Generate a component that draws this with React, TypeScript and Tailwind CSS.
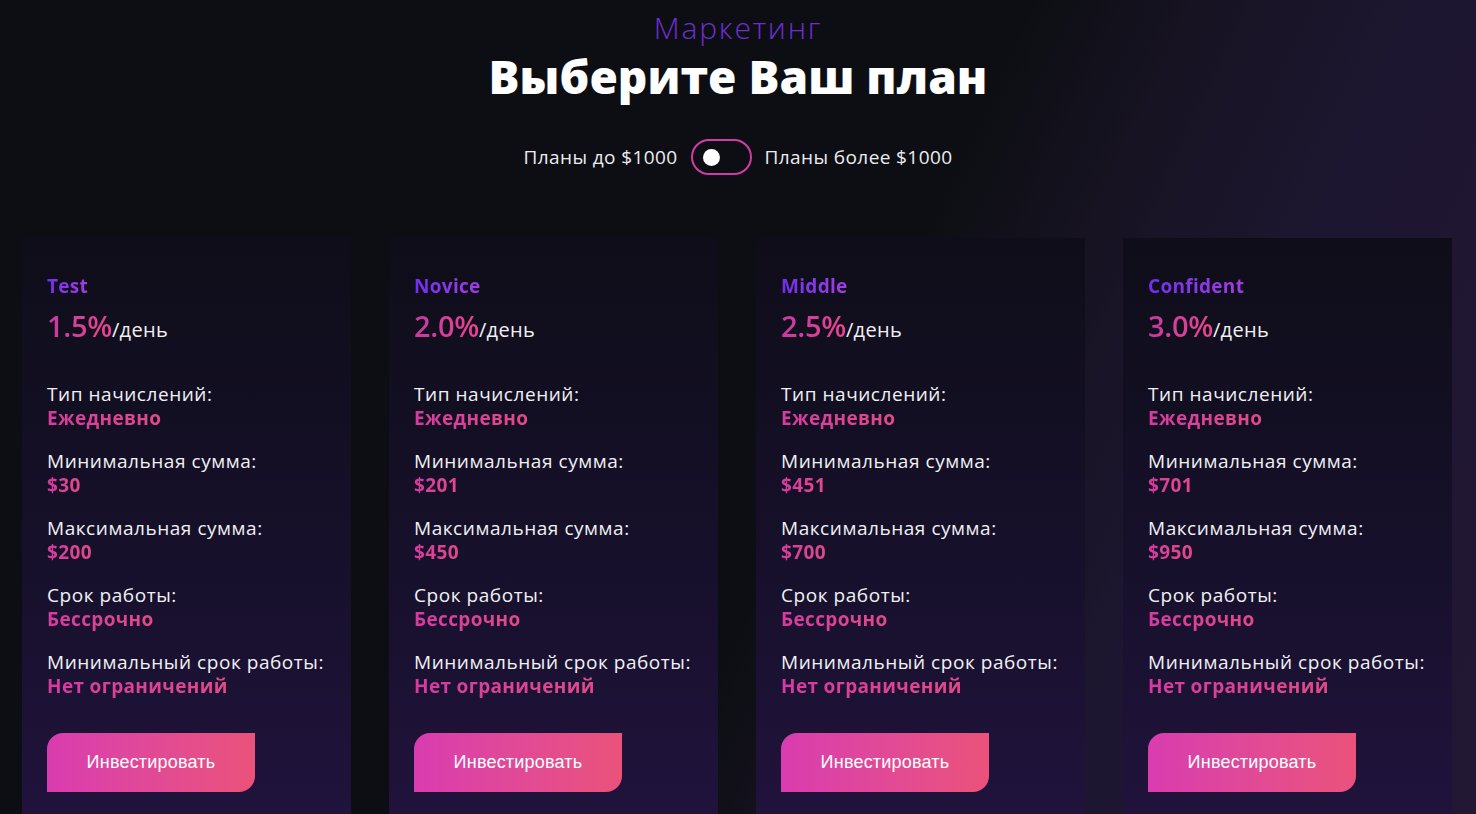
import React from "react";

const plans = [
  { name: "Test", rate: "1.5%", min: "$30", max: "$200" },
  { name: "Novice", rate: "2.0%", min: "$201", max: "$450" },
  { name: "Middle", rate: "2.5%", min: "$451", max: "$700" },
  { name: "Confident", rate: "3.0%", min: "$701", max: "$950" },
];

function Row({ label, value }: { label: string; value: string }) {
  return (
    <div className="flex flex-col">
      <div className="text-[19px] leading-[24px] tracking-[0.55px] text-[#f1f1f4]">{label}</div>
      <div className="text-[19px] leading-[24px] font-bold tracking-[0.35px] bg-gradient-to-r from-[#d63a9f] to-[#e04a8a] bg-clip-text text-transparent w-fit">
        {value}
      </div>
    </div>
  );
}

function Card({ p }: { p: (typeof plans)[number] }) {
  return (
    <div className="w-[329px] shrink-0 bg-gradient-to-b from-[#0f0d19] via-[#16102a] to-[#22133f] pl-[25px] pt-[36px] pb-[60px]">
      <div className="text-[19px] leading-[24px] font-bold tracking-[0.3px] bg-gradient-to-r from-[#6f2ff0] to-[#a23de0] bg-clip-text text-transparent w-fit">
        {p.name}
      </div>
      <div className="mt-[10px] flex items-baseline">
        <span className="text-[29px] leading-[36px] font-semibold tracking-[-0.3px] bg-gradient-to-r from-[#c73aa2] to-[#e8458d] bg-clip-text text-transparent">
          {p.rate}
        </span>
        <span className="text-[20px] tracking-[0.3px] text-[#f1f1f4]">/день</span>
      </div>
      <div className="mt-[37px] flex flex-col gap-[19px]">
        <Row label="Тип начислений:" value="Ежедневно" />
        <Row label="Минимальная сумма:" value={p.min} />
        <Row label="Максимальная сумма:" value={p.max} />
        <Row label="Срок работы:" value="Бессрочно" />
        <Row label="Минимальный срок работы:" value="Нет ограничений" />
      </div>
      <button className="mt-[35px] w-[208px] h-[59px] rounded-tl-[16px] rounded-br-[16px] bg-gradient-to-r from-[#d93cb0] to-[#ea527a] text-white text-[18px] tracking-[0.2px] [font-family:'Liberation_Sans',Arial,sans-serif]">
        Инвестировать
      </button>
    </div>
  );
}

export default function App() {
  return (
    <div className="min-h-[814px] w-full overflow-hidden bg-[#0d0e13] [font-family:'Open_Sans','Noto_Sans',sans-serif]">
      <div className="relative bg-[linear-gradient(115deg,#0d0e13_0%,#0d0e13_55%,#171322_64%,#1d1630_76%,#231834_100%)]">
        <div className="flex flex-col items-center pt-[8px]">
          <div className="text-[30px] leading-[40px] font-light tracking-[1.8px] text-[#6c2fd0]">Маркетинг</div>
          <h1 className="mt-[0px] text-[46px] leading-[56px] font-extrabold text-white">Выберите Ваш план</h1>
          <div className="mt-[35px] flex items-center gap-[13px] text-[19px] tracking-[0.4px] text-[#ececf0]">
            <span>Планы до $1000</span>
            <div className="w-[61px] h-[36px] rounded-full border-[2.5px] border-[#d23aa8] flex items-center pl-[10px]">
              <div className="w-[17px] h-[17px] rounded-full bg-white" />
            </div>
            <span>Планы более $1000</span>
          </div>
        </div>
        <div className="mt-[63px] flex gap-[38px] pl-[22px]">
          {plans.map((p) => (
            <Card key={p.name} p={p} />
          ))}
        </div>
      </div>
    </div>
  );
}
